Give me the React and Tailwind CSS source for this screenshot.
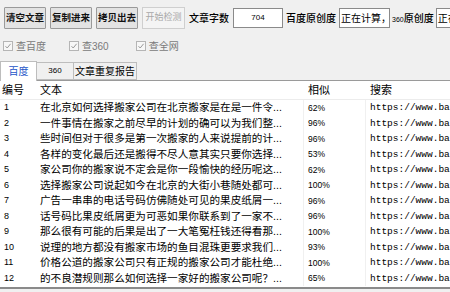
import React from 'react';

const rows = [
  ['1', '在北京如何选择搬家公司在北京搬家是在是一件令...', '62%'],
  ['2', '一件事情在搬家之前尽早的计划的确可以为我们整...', '96%'],
  ['3', '些时间但对于很多是第一次搬家的人来说提前的计...', '96%'],
  ['4', '各样的变化最后还是搬得不尽人意其实只要你选择...', '53%'],
  ['5', '家公司你的搬家说不定会是你一段愉快的经历呢这...', '62%'],
  ['6', '选择搬家公司说起如今在北京的大街小巷随处都可...', '100%'],
  ['7', '广告一串串的电话号码仿佛随处可见的果皮纸屑一...', '96%'],
  ['8', '话号码比果皮纸屑更为可恶如果你联系到了一家不...', '96%'],
  ['9', '那么很有可能的后果是出了一大笔冤枉钱还得看那...', '100%'],
  ['10', '说理的地方都没有搬家市场的鱼目混珠更要求我们...', '93%'],
  ['11', '价格公道的搬家公司只有正规的搬家公司才能杜绝...', '100%'],
  ['12', '的不良潜规则那么如何选择一家好的搬家公司呢？...', '65%'],
];

function Btn({ children, disabled }) {
  return (
    <div
      className={
        disabled
          ? 'shrink-0 h-[22px] w-[43px] flex items-center justify-center border border-[#cfcfcf] bg-[#f4f4f4] text-[#a8a8a8] text-[9px]'
          : 'shrink-0 h-[22px] w-[42px] flex items-center justify-center border border-[#9a9a9a] bg-[#e3e3e3] text-[#111] text-[9.5px] font-bold rounded-[1px]'
      }
    >
      {children}
    </div>
  );
}

function Check({ label }) {
  return (
    <div className="shrink-0 flex items-center gap-[3px] text-[10px] text-[#7a7a7a]">
      <span className="w-[10px] h-[10px] border border-[#b5b5b5] bg-[#f7f7f7] flex items-center justify-center">
        <svg width="8" height="8" viewBox="0 0 8 8">
          <path d="M1.5 4.2 L3.2 6 L6.6 1.8" fill="none" stroke="#9a9a9a" strokeWidth="1" />
        </svg>
      </span>
      <span>{label}</span>
    </div>
  );
}

export default function App() {
  const font = { fontFamily: '"Liberation Sans", "Noto Sans CJK SC", sans-serif' };
  return (
    <div className="w-[450px] h-[292px] overflow-hidden bg-[#f0f0f0] text-black" style={font}>
      {/* toolbar */}
      <div className="flex items-center h-[36px] pl-[4px] whitespace-nowrap">
        <div className="shrink-0 flex gap-[4px]">
          <Btn>清空文章</Btn>
          <Btn>复制进来</Btn>
          <Btn>拷贝出去</Btn>
          <Btn disabled>开始检测</Btn>
        </div>
        <span className="shrink-0 ml-[4px] text-[10px] font-medium">文章字数</span>
        <div className="shrink-0 ml-[4px] w-[50px] h-[20px] border border-[#8a8a8a] bg-white flex items-center justify-center text-[8px]">704</div>
        <span className="shrink-0 ml-[3px] text-[10px] font-medium">百度原创度</span>
        <div className="shrink-0 ml-[3px] w-[51px] h-[20px] border border-[#8a8a8a] bg-white flex items-center px-[1px] text-[10px] overflow-hidden">正在计算，请</div>
        <span className="shrink-0 ml-[2px] text-[10px] font-medium"><span className="text-[7px]">360</span>原创度</span>
        <div className="shrink-0 ml-[2px] w-[40px] h-[20px] border border-[#8a8a8a] bg-white flex items-center px-[1px] text-[10px] overflow-hidden">正在计算</div>
      </div>

      {/* checkboxes */}
      <div className="flex items-center h-[20px] pl-[3px]">
        <Check label="查百度" />
        <div className="shrink-0 ml-[23px]"><Check label="查360" /></div>
        <div className="shrink-0 ml-[27px]"><Check label="查全网" /></div>
      </div>

      {/* tabs */}
      <div className="flex items-end h-[25px] border-b border-[#9a9a9a]">
        <div className="shrink-0 w-[37px] h-[20px] bg-white border border-b-0 border-[#bdbdbd] flex items-center justify-center text-[10px] text-[#2455c8] -mb-px">百度</div>
        <div className="shrink-0 w-[37px] h-[18px] bg-[#f0f0f0] border border-l-0 border-[#bdbdbd] flex items-center justify-center text-[8px]">360</div>
        <div className="shrink-0 w-[63px] h-[18px] bg-[#f0f0f0] border border-l-0 border-[#bdbdbd] flex items-center justify-center text-[10px]">文章重复报告</div>
      </div>

      {/* table */}
      <div className="bg-white h-[208px] border-b-2 border-[#8a8a8a] whitespace-nowrap overflow-hidden">
        <div className="flex items-center h-[19px] text-[11px] border-b border-[#ececec]">
          <div className="shrink-0 w-[38px] pl-[2px]">编号</div>
          <div className="shrink-0 w-[266px] pl-[2px]">文本</div>
          <div className="shrink-0 w-[62px] pl-[4px]">相似</div>
          <div className="shrink-0 pl-[4px]">搜索</div>
        </div>
        {rows.map((r) => (
          <div key={r[0]} className="flex items-center h-[15.5px] leading-none">
            <div className="shrink-0 w-[38px] pl-[4px] text-[9px]">{r[0]}</div>
            <div className="shrink-0 w-[266px] pl-[2px] h-full flex items-center overflow-hidden border-r border-[#f0f0f0] text-[10.6px]">{r[1]}</div>
            <div className="shrink-0 w-[62px] pl-[4px] h-full flex items-center text-[8.5px] border-r border-[#f0f0f0]">{r[2]}</div>
            <div className="shrink-0 pl-[4px] text-[9.5px]" style={{ fontFamily: '"Liberation Mono", monospace' }}>https://www.baidu.com</div>
          </div>
        ))}
      </div>
    </div>
  );
}
